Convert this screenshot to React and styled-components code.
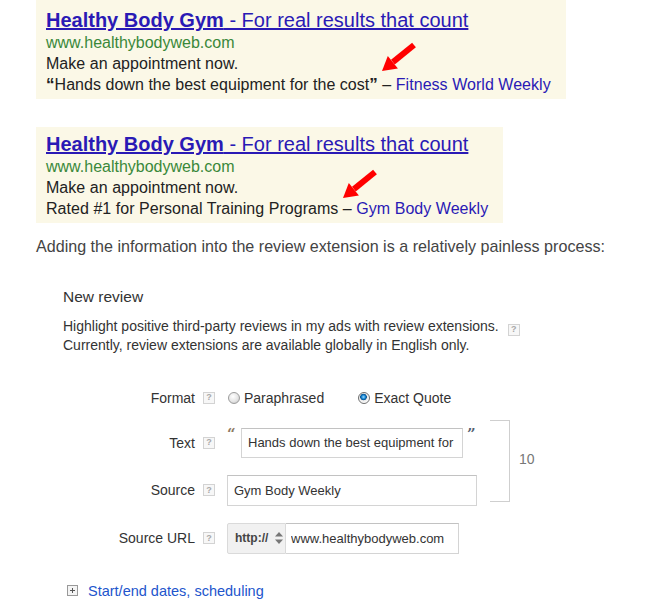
import React from "react";
import styled, { createGlobalStyle } from "styled-components";

const GlobalStyle = createGlobalStyle`
  body {
    margin: 0;
    background: #fff;
    font-family: "Liberation Sans", Arial, sans-serif;
  }
`;

function Arrow({ left }) {
  return (
    <ArrowMark left={left} width="36" height="31" viewBox="0 0 36 31">
      <line x1="12.9" y1="20.2" x2="34" y2="3" stroke="#f00" strokeWidth="6" />
      <polygon points="2,29 17.9,26.4 7.8,14" fill="#f00" />
    </ArrowMark>
  );
}

function Help() {
  return <HelpIcon>?</HelpIcon>;
}

function Ad({ width, top, bottom, arrowLeft, children }) {
  return (
    <AdBox width={width} top={top} bottom={bottom}>
      <AdTitle href="#">
        <b>Healthy Body Gym</b> - For real results that count
      </AdTitle>
      <AdUrl>www.healthybodyweb.com</AdUrl>
      <AdLine>Make an appointment now.</AdLine>
      <AdLine>{children}</AdLine>
      <Arrow left={arrowLeft} />
    </AdBox>
  );
}

function App() {
  return (
    <Page>
      <GlobalStyle />
      <Ad width={530} top={8} bottom={4} arrowLeft={344}>
        <b>“</b>Hands down the best equipment for the cost<b>”</b> –{" "}
        <Publisher>Fitness World Weekly</Publisher>
      </Ad>
      <Spacer h={28} />
      <Ad width={467} top={5} bottom={4} arrowLeft={305}>
        Rated #1 for Personal Training Programs –{" "}
        <Publisher>Gym Body Weekly</Publisher>
      </Ad>
      <Intro>
        Adding the information into the review extension is a relatively
        painless process:
      </Intro>

      <Panel>
        <PanelTitle>New review</PanelTitle>
        <Description>
          Highlight positive third-party reviews in my ads with review
          extensions. <Help />
          <br />
          Currently, review extensions are available globally in English only.
        </Description>

        <Row gap={34} h={20}>
          <Label>Format</Label>
          <Help />
          <Value>
            <RadioOption>
              <Radio />
              Paraphrased
            </RadioOption>
            <RadioOption>
              <Radio checked />
              Exact Quote
            </RadioOption>
          </Value>
        </Row>

        <FieldGroup>
          <GroupRows>
            <Row h={30}>
              <Label>Text</Label>
              <Help />
              <Value>
                <Quote>“</Quote>
                <Field
                  width={222}
                  h={30}
                  readOnly
                  defaultValue="Hands down the best equipment for the cost"
                />
                <Quote close>”</Quote>
              </Value>
            </Row>
            <Row h={31}>
              <Label>Source</Label>
              <Help />
              <Value>
                <Field width={250} h={31} readOnly defaultValue="Gym Body Weekly" />
              </Value>
            </Row>
          </GroupRows>
          <BracketArea>
            <Bracket />
            <Count>10</Count>
          </BracketArea>
        </FieldGroup>

        <Row gap={17} h={31}>
          <Label>Source URL</Label>
          <Help />
          <Value>
            <Scheme>
              http://
              <svg width="8" height="12" viewBox="0 0 8 12">
                <polygon points="4,0 8,4.5 0,4.5" fill="#777" />
                <polygon points="0,7.5 8,7.5 4,12" fill="#777" />
              </svg>
            </Scheme>
            <Field width={173} h={31} pad={5} square readOnly defaultValue="www.healthybodyweb.com" />
          </Value>
        </Row>

        <Expander>
          <svg width="11" height="11" viewBox="0 0 11 11">
            <rect x="0.5" y="0.5" width="10" height="10" fill="#f4f4f4" stroke="#999" />
            <path d="M3 5.5h5M5.5 3v5" stroke="#555" strokeWidth="1" />
          </svg>
          <ExpanderLink href="#">Start/end dates, scheduling</ExpanderLink>
        </Expander>
      </Panel>
    </Page>
  );
}

export default App;

const Page = styled.div`
  padding-left: 36px;
  width: 634px;
  height: 601px;
  overflow: hidden;
`;

const Spacer = styled.div`
  height: ${(p) => p.h}px;
`;

const AdBox = styled.div`
  position: relative;
  box-sizing: border-box;
  width: ${(p) => p.width}px;
  background: #fbf8e7;
  padding: ${(p) => p.top}px 0 ${(p) => p.bottom}px 10px;
  white-space: nowrap;
`;

const AdTitle = styled.a`
  display: block;
  font-size: 20px;
  line-height: 24px;
  color: #2a1ab5;
  text-decoration: underline;
  b {
    font-weight: bold;
  }
`;

const AdUrl = styled.div`
  font-size: 16px;
  line-height: 21px;
  color: #3a883a;
`;

const AdLine = styled.div`
  font-size: 16px;
  line-height: 21px;
  color: #222;
  letter-spacing: 0.04px;
  b {
    font-size: 17px;
  }
`;

const Publisher = styled.span`
  color: #2a1ab5;
`;

const ArrowMark = styled.svg`
  position: absolute;
  left: ${(p) => p.left}px;
  top: 42px;
`;

const Intro = styled.div`
  margin-top: 13px;
  font-size: 16.1px;
  line-height: 20px;
  color: #444;
  white-space: nowrap;
`;

const Panel = styled.div`
  padding-left: 27px;
`;

const PanelTitle = styled.div`
  margin-top: 31px;
  font-size: 15.5px;
  line-height: 20px;
  color: #333;
`;

const Description = styled.div`
  margin-top: 10px;
  font-size: 14px;
  line-height: 18px;
  color: #333;
  white-space: nowrap;
  span {
    margin-left: 5px;
    vertical-align: -1px;
  }
`;

const HelpIcon = styled.span`
  display: inline-flex;
  align-items: center;
  justify-content: center;
  box-sizing: border-box;
  width: 12px;
  height: 12px;
  border: 1px solid #d3d3d3;
  background: #f7f7f7;
  color: #a8a8a8;
  font-size: 9px;
  font-weight: bold;
  line-height: 1;
  flex-shrink: 0;
`;

const Row = styled.div`
  display: flex;
  align-items: center;
  height: ${(p) => p.h}px;
  margin-top: ${(p) => p.gap || 0}px;
  font-size: 14px;
  color: #333;
  ${HelpIcon} {
    margin-left: 8px;
  }
`;

const Label = styled.div`
  width: 132px;
  text-align: right;
  white-space: nowrap;
`;

const Value = styled.div`
  display: flex;
  align-items: center;
  height: 100%;
  margin-left: 12px;
`;

const RadioOption = styled.label`
  display: flex;
  align-items: center;
  gap: 4px;
  margin-left: 1px;
  margin-right: 33px;
  white-space: nowrap;
`;

const Radio = styled.span`
  display: inline-block;
  box-sizing: border-box;
  width: 12px;
  height: 12px;
  border-radius: 50%;
  border: 1px solid ${(p) => (p.checked ? "#6f6f6f" : "#9c9c9c")};
  background: ${(p) =>
    p.checked
      ? "radial-gradient(circle at 45% 40%, #9fdcff 0, #1282d0 2px, #074f8c 3px, #e9e9e9 3.6px, #fff 6px)"
      : "radial-gradient(circle at 40% 35%, #ffffff 0, #e4e4e4 5px, #cfcfcf 7px)"};
`;

const FieldGroup = styled.div`
  display: flex;
  margin-top: 12px;
`;

const GroupRows = styled.div`
  display: flex;
  flex-direction: column;
  gap: 17px;
  padding-top: 8px;
`;

const Quote = styled.span`
  align-self: flex-start;
  width: ${(p) => (p.close ? 13 : 14)}px;
  padding-left: ${(p) => (p.close ? 4 : 0)}px;
  margin-top: -1px;
  font-family: "DejaVu Serif", serif;
  font-weight: bold;
  font-size: 15px;
  line-height: 14px;
  color: ${(p) => (p.close ? "#55606e" : "#8d7a62")};
`;

const Field = styled.input`
  box-sizing: border-box;
  width: ${(p) => p.width}px;
  height: ${(p) => p.h}px;
  padding: 0 ${(p) => p.pad || 6}px;
  border: 1px solid #d4d4d4;
  border-top-color: #c2c2c2;
  border-radius: 0;
  ${(p) => p.square && "border-left: none;"}
  font-family: "Liberation Sans", Arial, sans-serif;
  font-size: 13px;
  color: #333;
  background: #fff;
  outline: none;
`;

const BracketArea = styled.div`
  display: flex;
  align-items: center;
  margin-left: 10px;
  margin-bottom: 4px;
`;

const Bracket = styled.div`
  align-self: stretch;
  box-sizing: border-box;
  width: 20px;
  border: 1px solid #cfcfcf;
  border-left: none;
`;

const Count = styled.div`
  margin-left: 9px;
  margin-top: -3px;
  font-size: 14px;
  color: #777;
`;

const Scheme = styled.div`
  display: flex;
  align-items: center;
  gap: 7px;
  box-sizing: border-box;
  width: 59px;
  height: 31px;
  padding-left: 7px;
  border: 1px solid #dadada;
  border-radius: 2px 0 0 2px;
  background: #f1f1f1;
  font-size: 12px;
  font-weight: bold;
  color: #444;
`;

const Expander = styled.div`
  display: flex;
  align-items: center;
  gap: 10px;
  margin-top: 29px;
  padding-left: 4px;
  height: 16px;
`;

const ExpanderLink = styled.a`
  font-size: 14.5px;
  color: #2255cc;
  text-decoration: none;
  white-space: nowrap;
`;
